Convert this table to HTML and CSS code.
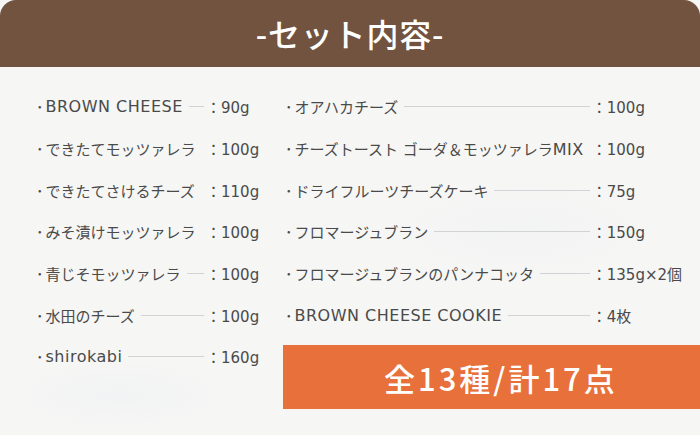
FILE: index.html
```html
<!DOCTYPE html>
<html lang="ja">
<head>
<meta charset="utf-8">
<link rel="stylesheet" href="styles.css">
</head>
<body>
<div class="page">
  <header class="head"><h1 class="title">-セット内容-</h1></header>
  <main class="content">
    <section class="col col-left">
      <div class="row"><span class="dot">･</span><span class="name lat">BROWN CHEESE</span><span class="rule"></span><span class="val">：90g</span></div>
      <div class="row"><span class="dot">･</span><span class="name">できたてモッツァレラ</span><span class="rule rule-none"></span><span class="val">：100g</span></div>
      <div class="row"><span class="dot">･</span><span class="name">できたてさけるチーズ</span><span class="rule rule-none"></span><span class="val">：110g</span></div>
      <div class="row"><span class="dot">･</span><span class="name">みそ漬けモッツァレラ</span><span class="rule rule-none"></span><span class="val">：100g</span></div>
      <div class="row"><span class="dot">･</span><span class="name">青じそモッツァレラ</span><span class="rule"></span><span class="val">：100g</span></div>
      <div class="row"><span class="dot">･</span><span class="name">水田のチーズ</span><span class="rule"></span><span class="val">：100g</span></div>
      <div class="row"><span class="dot">･</span><span class="name lat">shirokabi</span><span class="rule"></span><span class="val">：160g</span></div>
    </section>
    <section class="col col-right">
      <div class="row"><span class="dot">･</span><span class="name">オアハカチーズ</span><span class="rule"></span><span class="val">：100g</span></div>
      <div class="row"><span class="dot">･</span><span class="name">チーズトースト ゴーダ＆モッツァレラ<span class="lat">MIX</span></span><span class="rule rule-none"></span><span class="val">：100g</span></div>
      <div class="row"><span class="dot">･</span><span class="name">ドライフルーツチーズケーキ</span><span class="rule"></span><span class="val">：75g</span></div>
      <div class="row"><span class="dot">･</span><span class="name">フロマージュブラン</span><span class="rule"></span><span class="val">：150g</span></div>
      <div class="row"><span class="dot">･</span><span class="name">フロマージュブランのパンナコッタ</span><span class="rule"></span><span class="val">：135g×2個</span></div>
      <div class="row"><span class="dot">･</span><span class="name lat">BROWN CHEESE COOKIE</span><span class="rule"></span><span class="val">：4枚</span></div>
      <div class="total">全13種/計17点</div>
    </section>
  </main>
</div>
</body>
</html>
```
FILE: styles.css
```css
html, body {
  margin: 0;
  padding: 0;
}
body {
  width: 700px;
  height: 435px;
  overflow: hidden;
  background: #f6f6f5;
  font-family: "DejaVu Sans", "Noto Sans CJK JP", sans-serif;
  color: #4a4a4a;
}
.page {
  width: 700px;
  height: 435px;
  background:
    radial-gradient(ellipse 160px 50px at 120px 395px, rgba(228,231,238,0.25), transparent 70%),
    radial-gradient(ellipse 200px 70px at 520px 230px, rgba(230,232,238,0.2), transparent 70%),
    #f6f6f5;
}
.head {
  height: 67px;
  background: #71533f;
  border-radius: 16px 16px 0 0;
  display: flex;
  align-items: center;
  justify-content: center;
}
.title {
  margin: 0;
  color: #fff;
  font-family: "Noto Sans CJK JP", sans-serif;
  font-size: 32px;
  font-weight: 500;
  letter-spacing: 0.8px;
  line-height: 1;
  padding-bottom: 2px;
}
.content {
  display: grid;
  grid-template-columns: 224px 1fr;
  column-gap: 23px;
  padding: 19px 0 0 36px;
}
.col {
  display: flex;
  flex-direction: column;
}
.row {
  display: flex;
  align-items: center;
  height: 41.7px;
  font-size: 15px;
  white-space: nowrap;
}
.dot {
  flex: none;
  font-family: "Noto Sans CJK JP", sans-serif;
  margin-right: 2px;
}
.name {
  flex: none;
}
.lat {
  font-size: 16px;
  letter-spacing: 0.5px;
}
.rule {
  flex: 1;
  min-width: 0;
  height: 1px;
  background: #d2d3d7;
  margin: 0 2px 0 6px;
}
.rule-none {
  background: transparent;
}
.val {
  flex: none;
  width: 54px;
}
.col-right .row {
  padding-left: 2px;
}
.col-right .val {
  width: 112px;
}
.total {
  margin-top: 9px;
  height: 64px;
  background: #e8703a;
  color: #fff;
  font-family: "Noto Sans CJK JP", sans-serif;
  font-size: 31px;
  font-weight: 500;
  letter-spacing: 3px;
  display: flex;
  align-items: center;
  justify-content: center;
  padding-left: 15px;
}
```
